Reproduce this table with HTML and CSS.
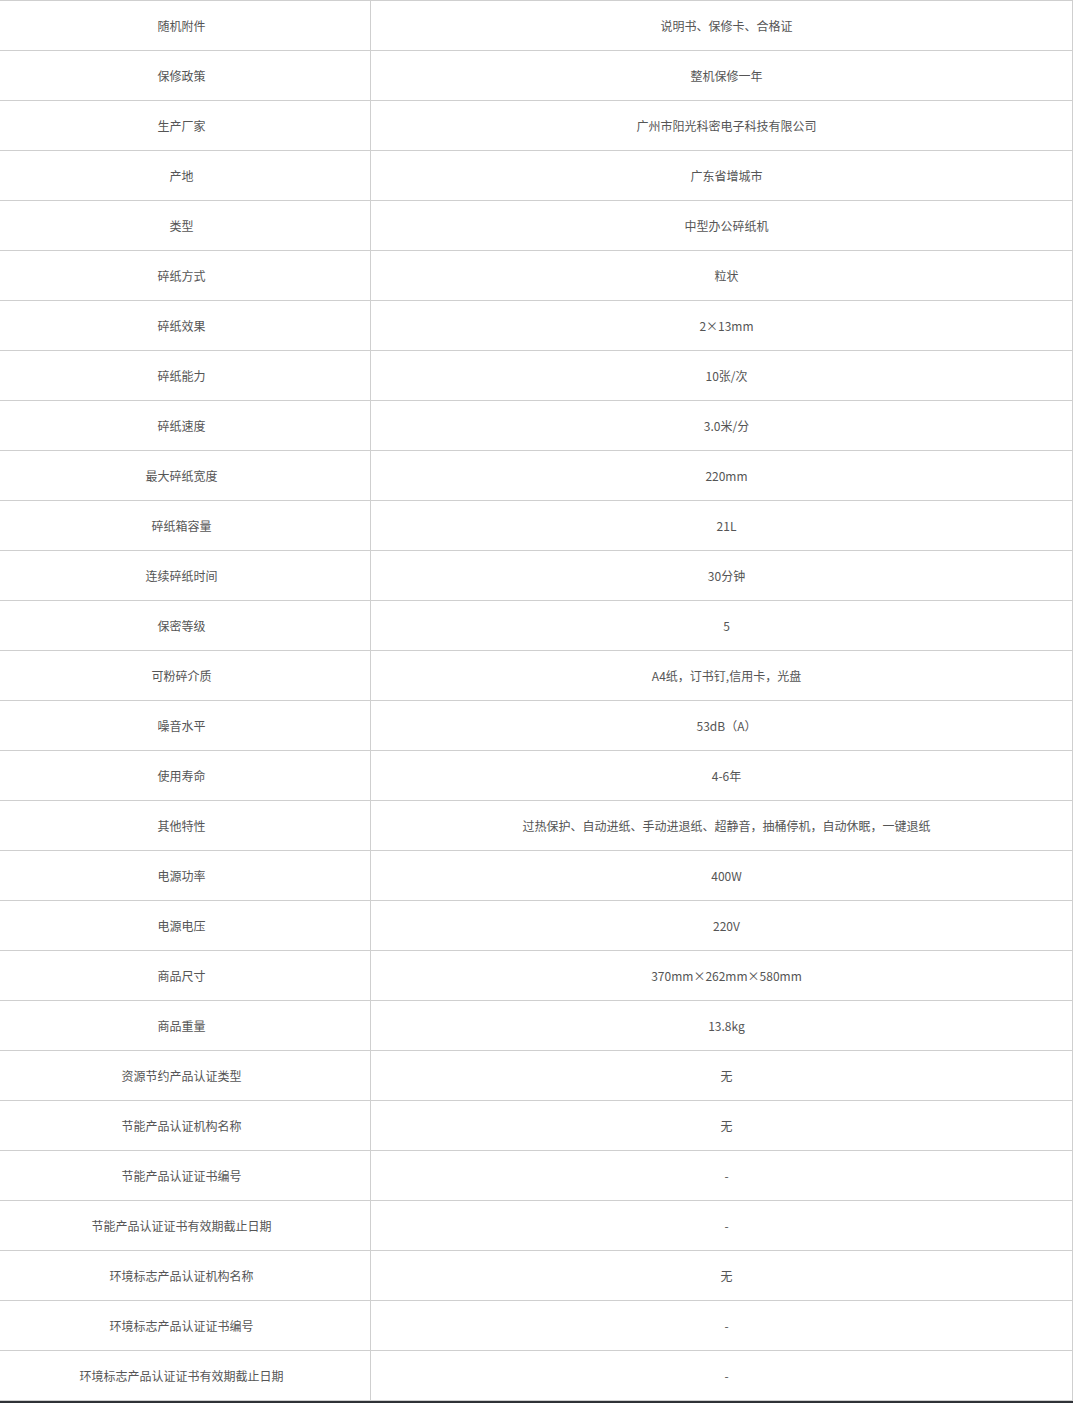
FILE: index.html
```html
<!DOCTYPE html>
<html lang="zh-CN">
<head>
<meta charset="utf-8">
<title>规格参数</title>
<link rel="stylesheet" href="styles.css">
</head>
<body>
<div class="spec">
  <div class="row"><div class="k">随机附件</div><div class="v">说明书、保修卡、合格证</div></div>
  <div class="row"><div class="k">保修政策</div><div class="v">整机保修一年</div></div>
  <div class="row"><div class="k">生产厂家</div><div class="v">广州市阳光科密电子科技有限公司</div></div>
  <div class="row"><div class="k">产地</div><div class="v">广东省增城市</div></div>
  <div class="row"><div class="k">类型</div><div class="v">中型办公碎纸机</div></div>
  <div class="row"><div class="k">碎纸方式</div><div class="v">粒状</div></div>
  <div class="row"><div class="k">碎纸效果</div><div class="v">2×13mm</div></div>
  <div class="row"><div class="k">碎纸能力</div><div class="v">10张/次</div></div>
  <div class="row"><div class="k">碎纸速度</div><div class="v">3.0米/分</div></div>
  <div class="row"><div class="k">最大碎纸宽度</div><div class="v">220mm</div></div>
  <div class="row"><div class="k">碎纸箱容量</div><div class="v">21L</div></div>
  <div class="row"><div class="k">连续碎纸时间</div><div class="v">30分钟</div></div>
  <div class="row"><div class="k">保密等级</div><div class="v">5</div></div>
  <div class="row"><div class="k">可粉碎介质</div><div class="v">A4纸，订书钉,信用卡，光盘</div></div>
  <div class="row"><div class="k">噪音水平</div><div class="v">53dB（A）</div></div>
  <div class="row"><div class="k">使用寿命</div><div class="v">4-6年</div></div>
  <div class="row"><div class="k">其他特性</div><div class="v">过热保护、自动进纸、手动进退纸、超静音，抽桶停机，自动休眠，一键退纸</div></div>
  <div class="row"><div class="k">电源功率</div><div class="v">400W</div></div>
  <div class="row"><div class="k">电源电压</div><div class="v">220V</div></div>
  <div class="row"><div class="k">商品尺寸</div><div class="v">370mm×262mm×580mm</div></div>
  <div class="row"><div class="k">商品重量</div><div class="v">13.8kg</div></div>
  <div class="row"><div class="k">资源节约产品认证类型</div><div class="v">无</div></div>
  <div class="row"><div class="k">节能产品认证机构名称</div><div class="v">无</div></div>
  <div class="row"><div class="k">节能产品认证证书编号</div><div class="v">-</div></div>
  <div class="row"><div class="k">节能产品认证证书有效期截止日期</div><div class="v">-</div></div>
  <div class="row"><div class="k">环境标志产品认证机构名称</div><div class="v">无</div></div>
  <div class="row"><div class="k">环境标志产品认证证书编号</div><div class="v">-</div></div>
  <div class="row"><div class="k">环境标志产品认证证书有效期截止日期</div><div class="v">-</div></div>
</div>
<div class="footer-bar"></div>
</body>
</html>
```

FILE: styles.css
```css
html, body {
  margin: 0;
  padding: 0;
  background: #fff;
}
body {
  font-family: "Noto Sans CJK SC", "Microsoft YaHei", sans-serif;
  font-size: 12px;
  color: #555;
}
.spec {
  width: 1073px;
  box-sizing: border-box;
  border-right: 1px solid #cfcfcf;
  border-bottom: 1px solid #cfcfcf;
}
.row {
  display: grid;
  grid-template-columns: 371px 1fr;
  height: 50px;
  box-sizing: border-box;
  border-top: 1px solid #cfcfcf;
}
.k, .v {
  display: flex;
  align-items: center;
  justify-content: center;
  line-height: 16px;
  white-space: nowrap;
}
.k {
  border-right: 1px solid #cfcfcf;
  padding-right: 7px;
}
.v {
  padding-left: 10px;
}
.footer-bar {
  width: 1073px;
  height: 2px;
  background: #2f3237;
}
```
